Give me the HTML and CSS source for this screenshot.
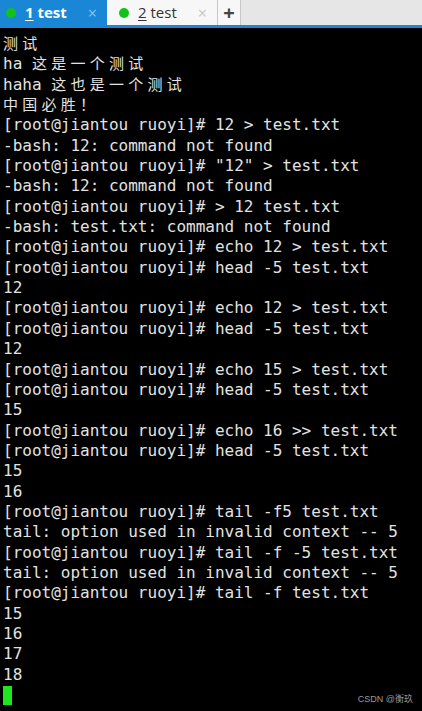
FILE: index.html
```html
<!DOCTYPE html>
<html>
<head>
<meta charset="utf-8">
<link rel="stylesheet" href="styles.css">
</head>
<body>
<div class="tabbar">
  <div class="tab tab-active">
    <span class="dot"></span>
    <span class="label"><u>1</u> test</span>
    <span class="close">×</span>
  </div>
  <div class="tab tab-idle">
    <span class="dot"></span>
    <span class="label"><u>2</u> test</span>
    <span class="close">×</span>
  </div>
  <div class="tab-add">+</div>
  <div class="tab-fill"></div>
</div>
<div class="term">
<div class="line"><span class="cjk">测试</span></div>
<div class="line">ha <span class="cjk">这是一个测试</span></div>
<div class="line">haha <span class="cjk">这也是一个测试</span></div>
<div class="line"><span class="cjk">中国必胜！</span></div>
<div class="line">[root@jiantou ruoyi]# 12 &gt; test.txt</div>
<div class="line">-bash: 12: command not found</div>
<div class="line">[root@jiantou ruoyi]# "12" &gt; test.txt</div>
<div class="line">-bash: 12: command not found</div>
<div class="line">[root@jiantou ruoyi]# &gt; 12 test.txt</div>
<div class="line">-bash: test.txt: command not found</div>
<div class="line">[root@jiantou ruoyi]# echo 12 &gt; test.txt</div>
<div class="line">[root@jiantou ruoyi]# head -5 test.txt</div>
<div class="line">12</div>
<div class="line">[root@jiantou ruoyi]# echo 12 &gt; test.txt</div>
<div class="line">[root@jiantou ruoyi]# head -5 test.txt</div>
<div class="line">12</div>
<div class="line">[root@jiantou ruoyi]# echo 15 &gt; test.txt</div>
<div class="line">[root@jiantou ruoyi]# head -5 test.txt</div>
<div class="line">15</div>
<div class="line">[root@jiantou ruoyi]# echo 16 &gt;&gt; test.txt</div>
<div class="line">[root@jiantou ruoyi]# head -5 test.txt</div>
<div class="line">15</div>
<div class="line">16</div>
<div class="line">[root@jiantou ruoyi]# tail -f5 test.txt</div>
<div class="line">tail: option used in invalid context -- 5</div>
<div class="line">[root@jiantou ruoyi]# tail -f -5 test.txt</div>
<div class="line">tail: option used in invalid context -- 5</div>
<div class="line">[root@jiantou ruoyi]# tail -f test.txt</div>
<div class="line">15</div>
<div class="line">16</div>
<div class="line">17</div>
<div class="line">18</div>
<div class="line last"><span class="cursor"></span><span class="watermark">CSDN @衡玖</span></div>
</div>
</body>
</html>
```
FILE: styles.css
```css
html, body {
  margin: 0;
  padding: 0;
  background: #000;
  width: 422px;
  height: 711px;
  overflow: hidden;
}
.tabbar {
  display: flex;
  height: 25px;
  border-bottom: 3px solid #1a87d6;
  background: #e6e6e6;
  font-family: "Open Sans", "Noto Sans", sans-serif;
  font-size: 15px;
}
.tab {
  display: flex;
  align-items: center;
  box-sizing: border-box;
  height: 25px;
  padding-left: 6px;
}
.tab-active {
  width: 107px;
  background: #1a87d6;
  color: #fff;
  font-weight: bold;
}
.tab-idle {
  width: 111px;
  background: #f7f7f7;
  color: #333;
  border-right: 1px solid #c8c8c8;
  padding-left: 12px;
}
.dot {
  width: 10px;
  height: 10px;
  border-radius: 50%;
  background: #12c21a;
  flex: none;
}
.label {
  margin-left: 9px;
  flex: 1;
  line-height: 1;
}
.label u {
  text-decoration-thickness: 1px;
  text-underline-offset: 2px;
}
.close {
  font-size: 16px;
  font-weight: normal;
  margin-right: 10px;
  line-height: 1;
}
.tab-active .close { color: #8cc4ee; }
.tab-idle .close { color: #c6c6c6; }
.tab-add {
  width: 22px;
  height: 25px;
  background: #f7f7f7;
  border-right: 1px solid #c8c8c8;
  display: flex;
  align-items: center;
  justify-content: center;
  font-size: 20px;
  font-weight: bold;
  color: #444;
  line-height: 1;
}
.tab-fill { flex: 1; }
.term {
  padding: 6px 0 0 3px;
  font-family: "DejaVu Sans Mono", monospace;
  font-size: 16px;
  color: #e2e2e2;
}
.line {
  height: 20.35px;
  line-height: 20.35px;
  white-space: pre;
}
.cjk {
  font-family: "Noto Sans CJK SC", sans-serif;
  font-size: 15px;
  line-height: 1;
  letter-spacing: 4.27px;
}
.last {
  display: flex;
  align-items: center;
  justify-content: space-between;
}
.cursor {
  display: inline-block;
  width: 9px;
  height: 19px;
  background: #1ee61e;
  margin-top: 1px;
}
.watermark {
  font-family: "Liberation Sans", "Noto Sans CJK SC", sans-serif;
  font-size: 9px;
  color: #9a9a9a;
  margin-right: 9px;
  margin-top: 8px;
  line-height: 1;
}
```
